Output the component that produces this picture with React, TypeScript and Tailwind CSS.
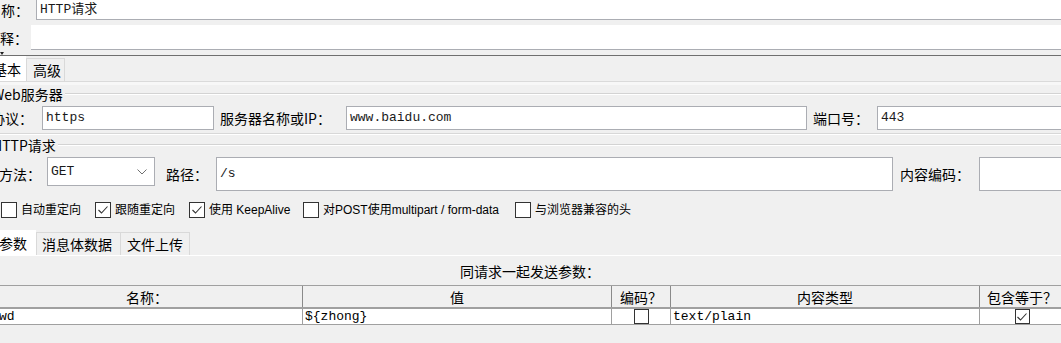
import type { ReactNode } from "react";

const MONO = "font-['Liberation_Mono','Noto_Sans_CJK_SC',monospace]";

function Box({ className = "", children }: { className?: string; children?: ReactNode }) {
  return (
    <div className={`flex items-center bg-white border border-[#abadb3] pl-[3px] text-[13px] text-[#1a1a1a] ${MONO} ${className}`}>
      {children}
    </div>
  );
}

function Check({ checked = false, size = "w-[16px] h-[16px]" }: { checked?: boolean; size?: string }) {
  return (
    <span className={`flex shrink-0 items-center justify-center bg-white border border-[#333333] ${size}`}>
      {checked && (
        <svg width="12" height="10" viewBox="0 0 12 10" fill="none">
          <path d="M1.5 5 L4.5 8 L10.5 1.5" stroke="#333333" strokeWidth="1.1" />
        </svg>
      )}
    </span>
  );
}

function GroupTitle({ label, indent }: { label: string; indent: string }) {
  return (
    <div className="flex h-[17px] items-center">
      <span className={`shrink-0 whitespace-nowrap text-[14px] leading-none ${indent}`}>{label}</span>
      <span className="ml-[2px] h-px flex-1 bg-[#d3d3d3] shadow-[0_1px_0_#ffffff]" />
    </div>
  );
}

const OPTIONS = [
  { label: "自动重定向", checked: false, w: "w-[94px]" },
  { label: "跟随重定向", checked: true, w: "w-[94px]" },
  { label: "使用 KeepAlive", checked: true, w: "w-[114px]" },
  { label: "对POST使用multipart / form-data", checked: false, w: "w-[212px]" },
  { label: "与浏览器兼容的头", checked: false, w: "w-[160px]" },
];

export default function App() {
  return (
    <div className="h-[343px] w-[1061px] overflow-hidden bg-[#f0f0f0] text-black font-['Noto_Sans_CJK_SC',sans-serif]">
      <div className="flex w-[1100px] flex-col">
        {/* 名称 */}
        <div className="flex h-[20px] items-center">
          <span className="-ml-[13px] w-[49px] shrink-0 text-[14px] leading-none">名称：</span>
          <Box className="h-full flex-1 border-t-0">HTTP请求</Box>
        </div>

        {/* 注释 */}
        <div className="mt-[5px] flex h-[25px] items-center">
          <span className="-ml-[14px] w-[45px] shrink-0 text-[14px] leading-none">注释：</span>
          <div className="h-full flex-1 border-b border-[#abadb3] bg-white" />
        </div>

        {/* divider */}
        <div className="h-[5px] flex items-end">
          <svg width="4" height="3" viewBox="0 0 4 3"><path d="M0 0 H4 L2 3 Z" fill="#222" /></svg>
        </div>
        <div className="h-px bg-[#6f6f6f]" />

        {/* top tabs */}
        <div className="flex h-[25px] items-end">
          <div className="-ml-[14px] flex h-[25px] w-[40px] items-center bg-white pl-[7px] text-[14px] leading-none">基本</div>
          <div className="flex h-[23px] w-[39px] items-center border border-b-0 border-[#d9d9d9] pl-[6px] text-[14px] leading-none">高级</div>
        </div>
        <div className="h-px bg-[#dadada]" />
        <div className="h-[3px] bg-[#f7f7f7]" />

        {/* Web服务器 */}
        <GroupTitle label="Web服务器" indent="-ml-[8px]" />
        <div className="mt-[4px] flex h-[24px] items-center">
          <span className="-ml-[9px] w-[51px] shrink-0 text-[14px] leading-none">协议：</span>
          <Box className="h-full w-[172px]">https</Box>
          <span className="ml-[6px] w-[126px] shrink-0 text-[14px] leading-none">服务器名称或IP：</span>
          <Box className="h-full w-[461px]">www.baidu.com</Box>
          <span className="ml-[6px] w-[64px] shrink-0 text-[14px] leading-none">端口号：</span>
          <Box className="h-full flex-1">443</Box>
        </div>
        <div className="mt-[3px] h-px bg-[#d8d8d8] shadow-[0_1px_0_#ffffff]" />

        {/* HTTP请求 */}
        <div className="mt-[2px]">
          <GroupTitle label="HTTP请求" indent="-ml-[8px]" />
        </div>
        <div className="mt-[4px] flex h-[34px] items-center">
          <span className="-ml-[1px] w-[48px] shrink-0 text-[14px] leading-none">方法：</span>
          <Box className="h-[29px] w-[108px] self-start justify-between pr-[7px]">
            <span>GET</span>
            <svg width="10" height="6" viewBox="0 0 10 6" fill="none">
              <path d="M0.5 0.5 L5 5 L9.5 0.5" stroke="#707070" strokeWidth="1" />
            </svg>
          </Box>
          <span className="ml-[11px] w-[50px] shrink-0 text-[14px] leading-none">路径：</span>
          <Box className="h-full w-[677px]">/s</Box>
          <span className="ml-[7px] w-[79px] shrink-0 text-[14px] leading-none">内容编码：</span>
          <Box className="h-full flex-1" />
        </div>

        {/* options */}
        <div className="mt-[10px] flex h-[17px] items-center pl-[1px]">
          {OPTIONS.map((o) => (
            <div key={o.label} className={`flex shrink-0 items-center ${o.w}`}>
              <Check checked={o.checked} />
              <span className="ml-[4px] whitespace-nowrap text-[12px] leading-none font-['Liberation_Sans','Noto_Sans_CJK_SC',sans-serif]">
                {o.label}
              </span>
            </div>
          ))}
        </div>

        {/* lower tabs */}
        <div className="mt-[12px] flex h-[25px] items-end">
          <div className="-ml-[8px] flex h-[25px] w-[44px] items-center bg-white pl-[7px] text-[14px] leading-none">参数</div>
          <div className="flex h-[23px] w-[85px] items-center border border-b-0 border-[#d9d9d9] pl-[5px] text-[14px] leading-none">消息体数据</div>
          <div className="flex h-[23px] w-[69px] items-center border border-b-0 border-l-0 border-[#d9d9d9] pl-[6px] text-[14px] leading-none">文件上传</div>
        </div>
        <div className="h-px bg-white" />

        <div className="flex h-[29px] w-[1060px] items-center justify-center text-[14px] leading-none">同请求一起发送参数：</div>

        {/* table */}
        <div className="-ml-[8px] flex h-[24px] border-t border-b-2 border-[#a0a0a0] text-[14px] leading-none">
          <div className="flex w-[311px] items-center justify-center border-r border-[#8a8a8a]">名称：</div>
          <div className="flex w-[309px] items-center justify-center border-r border-[#8a8a8a]">值</div>
          <div className="flex w-[59px] items-center justify-center border-r border-[#8a8a8a]">编码？</div>
          <div className="flex w-[309px] items-center justify-center border-r border-[#8a8a8a]">内容类型</div>
          <div className="flex w-[84px] items-center justify-center">包含等于？</div>
        </div>
        <div className={`-ml-[8px] flex h-[16px] border-b border-[#a0a0a0] bg-white text-[13px] leading-none ${MONO}`}>
          <div className="flex w-[311px] items-center border-r border-[#a0a0a0] pl-[7px]">wd</div>
          <div className="flex w-[309px] items-center border-r border-[#a0a0a0] pl-[2px]">{"${zhong}"}</div>
          <div className="flex w-[59px] items-center justify-center border-r border-[#a0a0a0]">
            <Check size="w-[15px] h-[15px]" />
          </div>
          <div className="flex w-[309px] items-center border-r border-[#a0a0a0] pl-[2px]">text/plain</div>
          <div className="flex w-[84px] items-center justify-center">
            <Check checked size="w-[15px] h-[15px]" />
          </div>
        </div>
      </div>
    </div>
  );
}
